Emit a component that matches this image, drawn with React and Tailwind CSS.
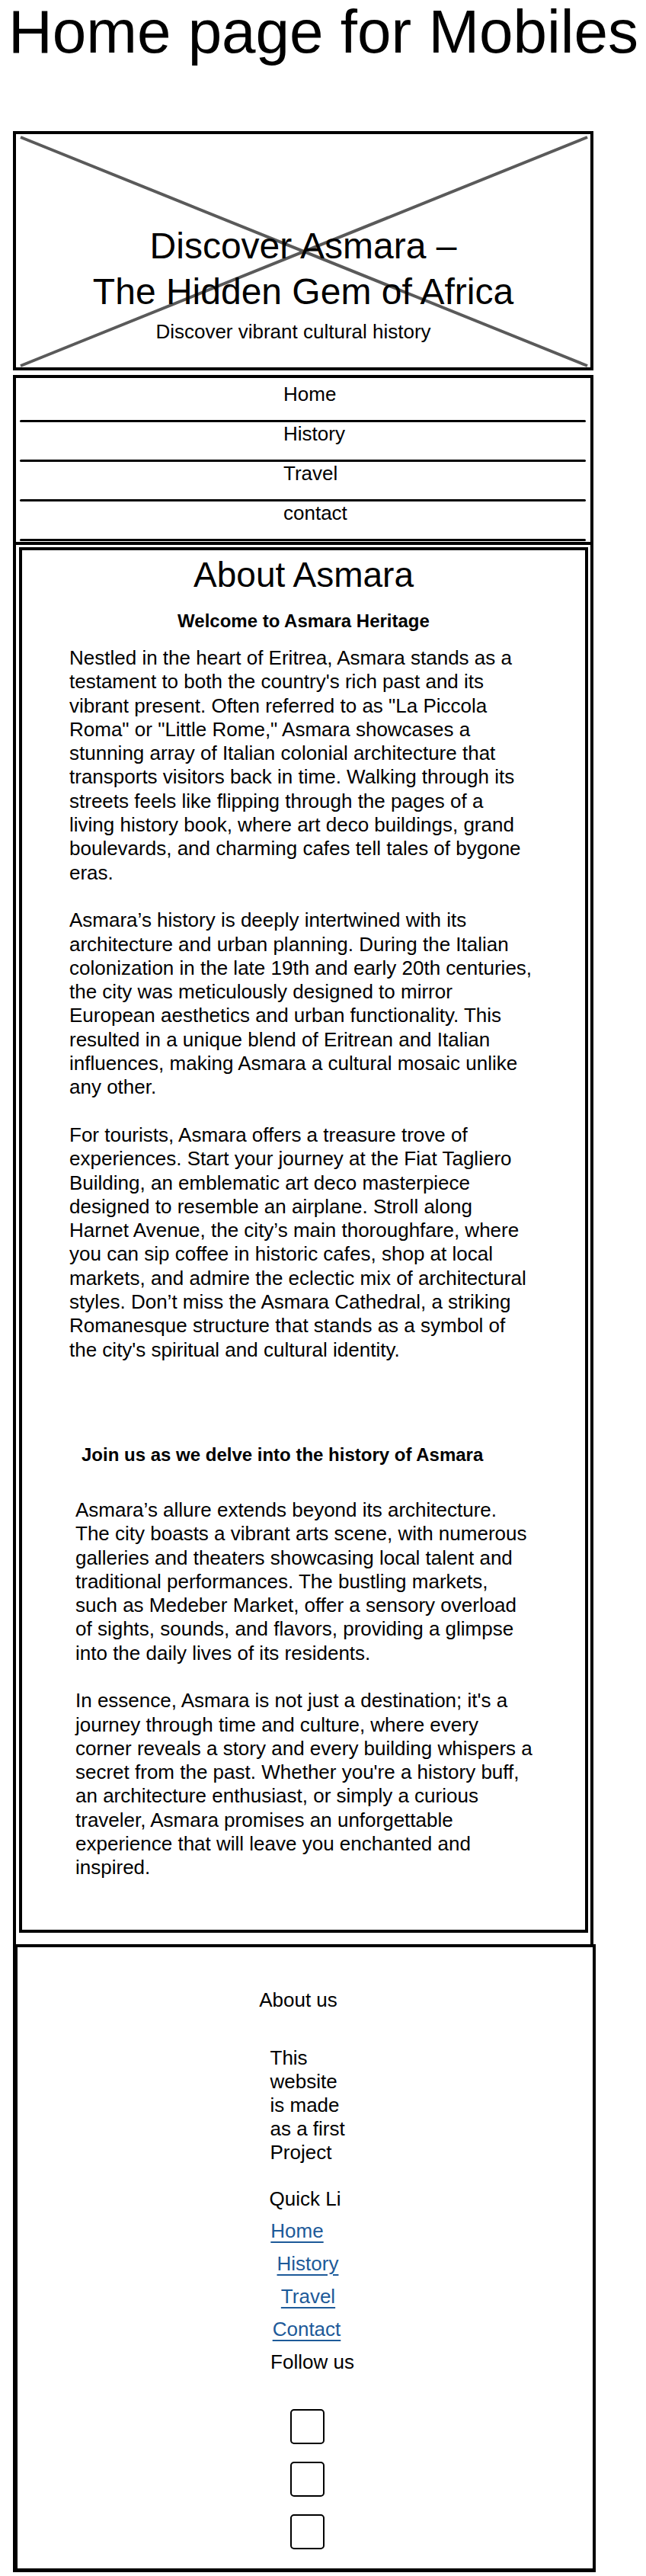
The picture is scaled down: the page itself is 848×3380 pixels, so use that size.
import React from 'react';

const p1 = [
  'Nestled in the heart of Eritrea, Asmara stands as a',
  "testament to both the country's rich past and its",
  'vibrant present. Often referred to as "La Piccola',
  'Roma" or "Little Rome," Asmara showcases a',
  'stunning array of Italian colonial architecture that',
  'transports visitors back in time. Walking through its',
  'streets feels like flipping through the pages of a',
  'living history book, where art deco buildings, grand',
  'boulevards, and charming cafes tell tales of bygone',
  'eras.',
];

const p2 = [
  'Asmara’s history is deeply intertwined with its',
  'architecture and urban planning. During the Italian',
  'colonization in the late 19th and early 20th centuries,',
  'the city was meticulously designed to mirror',
  'European aesthetics and urban functionality. This',
  'resulted in a unique blend of Eritrean and Italian',
  'influences, making Asmara a cultural mosaic unlike',
  'any other.',
];

const p3 = [
  'For tourists, Asmara offers a treasure trove of',
  'experiences. Start your journey at the Fiat Tagliero',
  'Building, an emblematic art deco masterpiece',
  'designed to resemble an airplane. Stroll along',
  'Harnet Avenue, the city’s main thoroughfare, where',
  'you can sip coffee in historic cafes, shop at local',
  'markets, and admire the eclectic mix of architectural',
  'styles. Don’t miss the Asmara Cathedral, a striking',
  'Romanesque structure that stands as a symbol of',
  "the city's spiritual and cultural identity.",
];

const p4 = [
  'Asmara’s allure extends beyond its architecture.',
  'The city boasts a vibrant arts scene, with numerous',
  'galleries and theaters showcasing local talent and',
  'traditional performances. The bustling markets,',
  'such as Medeber Market, offer a sensory overload',
  'of sights, sounds, and flavors, providing a glimpse',
  'into the daily lives of its residents.',
];

const p5 = [
  "In essence, Asmara is not just a destination; it's a",
  'journey through time and culture, where every',
  'corner reveals a story and every building whispers a',
  "secret from the past. Whether you're a history buff,",
  'an architecture enthusiast, or simply a curious',
  'traveler, Asmara promises an unforgettable',
  'experience that will leave you enchanted and',
  'inspired.',
];

const Para = ({ lines }) => (
  <p>
    {lines.map((line, i) => (
      <span key={i} className="block whitespace-nowrap">{line}</span>
    ))}
  </p>
);

const navItems = ['Home', 'History', 'Travel', 'contact'];

const App = () => {
  return (
    <div className="min-h-screen bg-white text-black font-['Liberation_Sans',Arial,sans-serif]">
      <h1 className="pl-[11px] pt-[2px] text-[80px] leading-[80px] whitespace-nowrap">Home page for Mobiles</h1>

      <div className="pl-[17px] mt-[90px]">
        {/* Hero placeholder */}
        <section className="relative w-[762px] h-[314px] border-4 border-black">
          <svg className="absolute inset-0" width="754" height="306" viewBox="0 0 754 306">
            <line x1="6" y1="4" x2="750" y2="304" stroke="#5a5a5a" strokeWidth="4" />
            <line x1="6" y1="304" x2="750" y2="4" stroke="#5a5a5a" strokeWidth="4" />
          </svg>
          <div className="relative flex flex-col items-center pt-[117px]">
            <h2 className="text-center text-[48px] leading-[60px]">
              Discover Asmara –<br />The Hidden Gem of Africa
            </h2>
            <p className="mt-[7px] pr-[26px] text-[26px] leading-[31px]">Discover vibrant cultural history</p>
          </div>
        </section>

        {/* Menu */}
        <nav className="mt-[6px] w-[762px] h-[223px] border-4 border-black pt-[6px]">
          {navItems.map((item) => (
            <div key={item}>
              <div className="h-[49px] pl-[351px] text-[26px] leading-[31px]">{item}</div>
              <div className="ml-[5px] mr-[6px] h-[3px] rounded-full bg-black" />
            </div>
          ))}
        </nav>

        {/* About */}
        <section className="w-[762px] border-x-4 border-black pt-[3px] pb-[15px]">
          <div className="ml-[4px] mr-[3px] border-4 border-black pt-[5px] pb-[65px]">
            <h2 className="text-center text-[46px] leading-[54px]">About Asmara</h2>
            <h3 className="mt-[18px] text-center text-[24px] leading-[31px] font-bold">Welcome to Asmara Heritage</h3>
            <div className="mt-[18px] pl-[62px] flex flex-col gap-[31.3px] text-[26px] leading-[31.3px]">
              <Para lines={p1} />
              <Para lines={p2} />
              <Para lines={p3} />
            </div>
            <h3 className="mt-[106px] pl-[78px] text-[24px] leading-[31px] font-bold">Join us as we delve into the history of Asmara</h3>
            <div className="mt-[42px] pl-[70px] flex flex-col gap-[31.3px] text-[26px] leading-[31.3px]">
              <Para lines={p4} />
              <Para lines={p5} />
            </div>
          </div>
        </section>

        {/* Footer */}
        <footer className="w-[765px] border-l-[6px] border-r-4 border-t-4 border-b-[5px] border-black flex flex-col items-center pt-[54px] pb-[25px] text-[26px] leading-[31px]">
          <p className="mr-[18px]">About us</p>
          <p className="mt-[45px] ml-[8px] w-[100px]">
            <span className="block">This</span>
            <span className="block">website</span>
            <span className="block">is made</span>
            <span className="block">as a first</span>
            <span className="block">Project</span>
          </p>
          <p className="mt-[30px]">Quick Li</p>
          <div className="mt-[11px] flex flex-col items-center gap-[12px]">
            <a href="#" className="mr-[21px] text-[#1d5a99] underline decoration-2 underline-offset-[5px]">Home</a>
            <a href="#" className="ml-[7px] text-[#1d5a99] underline decoration-2 underline-offset-[5px]">History</a>
            <a href="#" className="ml-[8px] text-[#1d5a99] underline decoration-2 underline-offset-[5px]">Travel</a>
            <a href="#" className="ml-[4px] text-[#1d5a99] underline decoration-2 underline-offset-[5px]">Contact</a>
            <p className="ml-[19px]">Follow us</p>
          </div>
          <div className="mt-[46px] ml-[5px] flex flex-col gap-[23px]">
            <div className="w-[45px] h-[46px] rounded-[5px] border-2 border-black" />
            <div className="w-[45px] h-[46px] rounded-[5px] border-2 border-black" />
            <div className="w-[45px] h-[46px] rounded-[5px] border-2 border-black" />
          </div>
        </footer>
      </div>
    </div>
  );
};

export default App;
